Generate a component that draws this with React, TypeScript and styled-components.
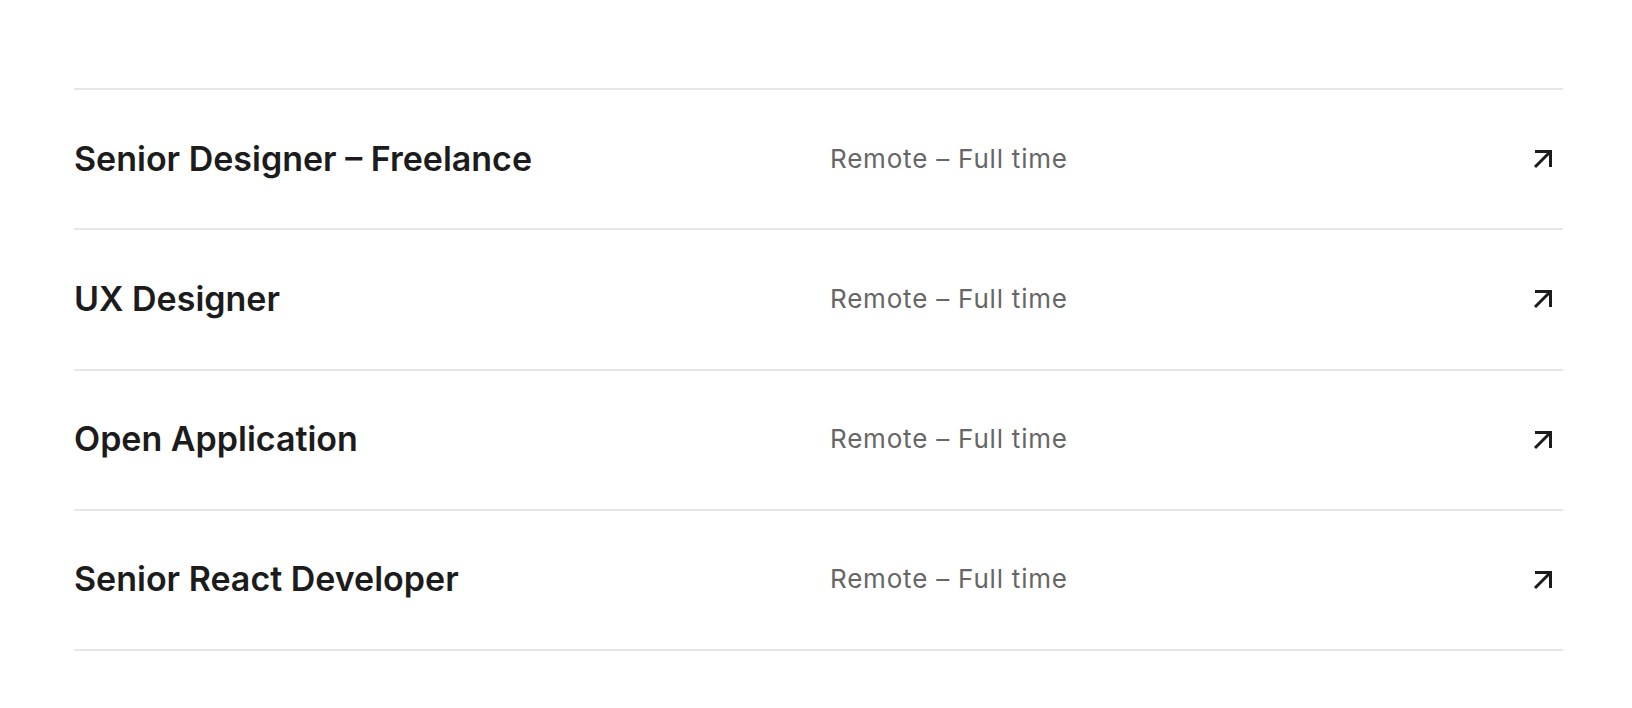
import React from "react";
import styled, { createGlobalStyle } from "styled-components";

const Global = createGlobalStyle`
  html, body { margin: 0; padding: 0; background: #ffffff; }
  body { font-family: "Inter", "Liberation Sans", sans-serif; -webkit-font-smoothing: antialiased; }
`;

const Page = styled.main`
  box-sizing: border-box;
  width: 1632px;
  height: 708px;
  padding: 88px 69px 0 74px;
`;

const List = styled.ul`
  list-style: none;
  margin: 0;
  padding: 0;
  border-bottom: 2px solid #e6e6e6;
`;

const Row = styled.li`
  display: grid;
  grid-template-columns: 756px 1fr auto;
  align-items: center;
  height: 138.25px;
  border-top: 2px solid #e6e6e6;
  padding-right: 10px;
`;

const Title = styled.h3`
  margin: 0;
  font-family: "Inter", "Liberation Sans", sans-serif;
  font-weight: 600;
  font-size: 34px;
  letter-spacing: 0;
  color: #1c1c1c;
  transform: translateY(-1px);
`;

const Meta = styled.span`
  font-family: "Inter", "Liberation Sans", sans-serif;
  font-weight: 400;
  font-size: 26px;
  letter-spacing: 0.8px;
  color: #666666;
  transform: translateY(-1px);
`;

const Arrow = styled.svg`
  width: 20px;
  height: 20px;
  display: block;
`;

const ArrowIcon = () => (
  <Arrow viewBox="0 0 20 20" fill="none" stroke="#1c1c1c" strokeWidth={3}>
    <path d="M2 18 L17.5 2.5" />
    <path d="M2 2.5 H17.5 V18" />
  </Arrow>
);

const jobs = [
  "Senior Designer – Freelance",
  "UX Designer",
  "Open Application",
  "Senior React Developer",
];

export default function App() {
  return (
    <>
      <Global />
      <Page>
        <List>
          {jobs.map((j) => (
            <Row key={j}>
              <Title>{j}</Title>
              <Meta>Remote – Full time</Meta>
              <ArrowIcon />
            </Row>
          ))}
        </List>
      </Page>
    </>
  );
}
